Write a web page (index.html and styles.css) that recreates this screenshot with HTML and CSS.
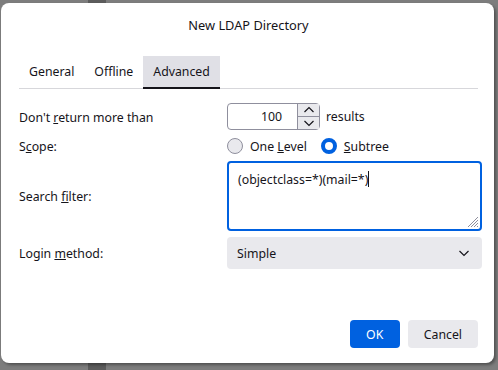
FILE: index.html
```html
<!DOCTYPE html>
<html lang="en">
  <head>
    <meta charset="UTF-8" />
    <title>New LDAP Directory</title>
    <link rel="stylesheet" href="styles.css">
  </head>
  <body>
    <div class="dialog">
      <h1 class="title">New LDAP Directory</h1>

      <div class="tabs">
        <span class="tab">General</span>
        <span class="tab">Offline</span>
        <span class="tab selected">Advanced</span>
      </div>

      <div class="form">
        <label class="label">Don't <u>r</u>eturn more than</label>
        <div class="field inline">
          <div class="number">
            <span class="value">100</span>
            <div class="spin">
              <span class="arrow">
                <svg width="12" height="8" viewBox="0 0 12 8" fill="none" stroke="currentColor" stroke-width="1.2">
                  <path d="M1.5 6l4.5 -4.5l4.5 4.5" />
                </svg>
              </span>
              <span class="arrow">
                <svg width="12" height="8" viewBox="0 0 12 8" fill="none" stroke="currentColor" stroke-width="1.2">
                  <path d="M1.5 2l4.5 4.5l4.5 -4.5" />
                </svg>
              </span>
            </div>
          </div>
          <span class="unit">results</span>
        </div>

        <label class="label">S<u>c</u>ope:</label>
        <div class="field inline radios">
          <span class="radio"><span class="dot"></span><span>One <u>L</u>evel</span></span>
          <span class="radio checked"><span class="dot"></span><span><u>S</u>ubtree</span></span>
        </div>

        <label class="label">Search <u>f</u>ilter:</label>
        <div class="field">
          <div class="textarea">
            <span>(objectclass=*)(mail=*)</span><span class="caret"></span>
            <svg class="grip" width="12" height="12" viewBox="0 0 12 12" stroke="#8f8f9d" stroke-width="1">
              <path d="M11 1L1 11M11 4L4 11M11 7L7 11M11 10L10 11" />
            </svg>
          </div>
        </div>

        <label class="label">Login <u>m</u>ethod:</label>
        <div class="field">
          <div class="select">
            <span>Simple</span>
            <svg width="14" height="14" viewBox="0 0 14 14" fill="none" stroke="#15141a" stroke-width="1.2">
              <path d="M2.5 5l4.5 4.5l4.5 -4.5" />
            </svg>
          </div>
        </div>
      </div>

      <div class="buttons">
        <button class="btn primary">OK</button>
        <button class="btn">Cancel</button>
      </div>
    </div>
  </body>
</html>
```

FILE: styles.css
```css
body {
  margin: 0;
  height: 370px;
  overflow: hidden;
  font-family: "Noto Sans", "Open Sans", sans-serif;
  font-size: 12.3px;
  color: #15141a;
  background: linear-gradient(
    to right,
    #7d7d7d 88px,
    #5c5c5c 88px,
    #5c5c5c 106px,
    #7d7d7d 106px
  );
}

.dialog {
  box-sizing: border-box;
  display: flex;
  flex-direction: column;
  margin: 3px 0 0 1px;
  width: 493px;
  height: 360px;
  padding: 0 16px 15px 18px;
  background: #fff;
  border-radius: 8px;
  box-shadow: 2px 2px 3px rgba(0, 0, 0, 0.35);
}

.title {
  margin: 0;
  padding-top: 13px;
  height: 25px;
  text-align: center;
  font-size: 12.8px;
  font-weight: normal;
}

.tabs {
  display: flex;
  margin-top: 15px;
  border-bottom: 1px solid #d7d7db;

  .tab {
    padding: 0 10px;
    height: 31px;
    line-height: 31px;
    margin-bottom: -1px;
    border-bottom: 2px solid transparent;

    &.selected {
      background: #e0e0e6;
      border-bottom-color: #15141a;
    }
  }
}

.form {
  display: grid;
  grid-template-columns: 208px 1fr;
  row-gap: 6px;
  align-items: center;
  margin-top: 14px;

  .label {
    padding-top: 1px;
  }

  .field {
    display: flex;
  }

  .inline {
    align-items: center;
    gap: 6px;
  }
}

.number {
  box-sizing: border-box;
  display: flex;
  width: 93px;
  height: 27px;
  border: 1px solid #8f8f9d;
  border-radius: 4px;

  .value {
    flex: 1;
    text-align: right;
    padding-right: 15px;
    line-height: 25px;
  }

  .spin {
    display: flex;
    flex-direction: column;
    width: 21px;
    border-left: 1px solid #8f8f9d;

    .arrow {
      flex: 1;
      display: grid;
      place-items: center;
      background: #e9e9ed;
      color: #15141a;

      & + .arrow {
        border-top: 1px solid #8f8f9d;
      }
    }
  }
}

.radios {
  height: 18px;
  padding-top: 1px;
  gap: 14px !important;

  .radio {
    display: flex;
    align-items: center;
    gap: 7px;
  }

  .dot {
    box-sizing: border-box;
    width: 16px;
    height: 16px;
    border-radius: 50%;
    border: 1px solid #8f8f9d;
    background: #e9e9ed;
  }

  .checked .dot {
    border: 4px solid #0061e0;
    background: #fff;
  }
}

.textarea {
  position: relative;
  box-sizing: border-box;
  width: 255px;
  height: 70px;
  padding: 8px 9px;
  border: 2px solid #0061e0;
  border-radius: 4px;

  .caret {
    display: inline-block;
    width: 1px;
    height: 16px;
    vertical-align: -3px;
    background: #15141a;
  }

  .grip {
    position: absolute;
    right: 1px;
    bottom: 1px;
  }
}

.select {
  box-sizing: border-box;
  display: flex;
  align-items: center;
  justify-content: space-between;
  width: 255px;
  height: 32px;
  padding: 0 11px 0 10px;
  background: #e9e9ed;
  border-radius: 4px;
}

.buttons {
  display: flex;
  justify-content: flex-end;
  gap: 8px;
  margin-top: auto;

  .btn {
    height: 28px;
    padding: 0 16px;
    border: none;
    border-radius: 4px;
    font: inherit;
    color: #15141a;
    background: #e9e9ed;

    &.primary {
      width: 50px;
      padding: 0;
      color: #fff;
      background: #0061e0;
    }
  }
}
```
